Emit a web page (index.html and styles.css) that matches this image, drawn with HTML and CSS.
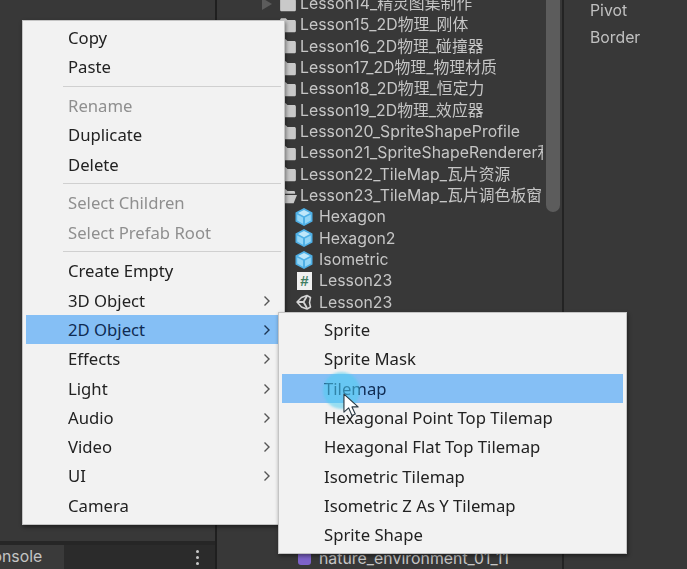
FILE: index.html
```html
<!DOCTYPE html>
<html lang="en">
<head>
<meta charset="utf-8">
<title>Unity context menu</title>
<link rel="stylesheet" href="styles.css">
</head>
<body>
<svg class="defs" width="0" height="0" aria-hidden="true">
  <defs>
    <symbol id="folder" viewBox="0 0 16 16"><path d="M1 3.500C1 2.600 1.600 2 2.500 2H6l1.500 1.500h6c.9 0 1.500.6 1.500 1.500v8c0 .9-.6 1.500-1.500 1.500h-11C1.600 14.500 1 13.900 1 13z" fill="#c9c9c9"/></symbol>
    <symbol id="folder-open" viewBox="0 0 16 16"><path d="M1 3.500C1 2.600 1.600 2 2.500 2H6l1.500 1.500h5.500c.8 0 1.300.5 1.300 1.300V6H4L1 13z" fill="#c9c9c9"/><path d="M4.300 7H16l-3 7.500H1.200z" fill="#c9c9c9"/></symbol>
    <symbol id="cube" viewBox="0 0 18 18"><path d="M9 0l8.500 4.400v9L9 18 .5 13.400v-9z" fill="#4fb0e6"/><path d="M9 2l6 3.100L9 8.300 3 5.100z" fill="#bfe7fa"/><path d="M2.200 6.500L8 9.600v6.100l-5.800-3.200zM15.800 6.500L10 9.600v6.100l5.800-3.200z" fill="#93d6f7"/></symbol>
  </defs>
</svg>
<div class="stage">
  <aside class="left-panel">
    <div class="left-body"></div>
    <div class="left-bar">
      <div class="tab">Console</div>
      <div class="kebab"><i></i><i></i><i></i></div>
    </div>
  </aside>
  <section class="project">
    <div class="tree">
      <div class="row folder-row"><span class="arrow"></span><svg class="ico-folder"><use href="#folder"/></svg><span class="label">Lesson14_精灵图集制作</span></div>
      <div class="row folder-row"><svg class="ico-folder"><use href="#folder"/></svg><span class="label">Lesson15_2D物理_刚体</span></div>
      <div class="row folder-row"><svg class="ico-folder"><use href="#folder"/></svg><span class="label">Lesson16_2D物理_碰撞器</span></div>
      <div class="row folder-row"><svg class="ico-folder"><use href="#folder"/></svg><span class="label">Lesson17_2D物理_物理材质</span></div>
      <div class="row folder-row"><svg class="ico-folder"><use href="#folder"/></svg><span class="label">Lesson18_2D物理_恒定力</span></div>
      <div class="row folder-row"><svg class="ico-folder"><use href="#folder"/></svg><span class="label">Lesson19_2D物理_效应器</span></div>
      <div class="row folder-row"><svg class="ico-folder"><use href="#folder"/></svg><span class="label">Lesson20_SpriteShapeProfile</span></div>
      <div class="row folder-row"><svg class="ico-folder"><use href="#folder"/></svg><span class="label">Lesson21_SpriteShapeRenderer利</span></div>
      <div class="row folder-row"><svg class="ico-folder"><use href="#folder"/></svg><span class="label">Lesson22_TileMap_瓦片资源</span></div>
      <div class="row folder-row"><svg class="ico-folder"><use href="#folder-open"/></svg><span class="label">Lesson23_TileMap_瓦片调色板窗口</span></div>
      <div class="row child-row"><svg class="ico-child"><use href="#cube"/></svg><span class="label">Hexagon</span></div>
      <div class="row child-row"><svg class="ico-child"><use href="#cube"/></svg><span class="label">Hexagon2</span></div>
      <div class="row child-row"><svg class="ico-child"><use href="#cube"/></svg><span class="label">Isometric</span></div>
      <div class="row child-row"><span class="ico-script">#</span><span class="label">Lesson23</span></div>
      <div class="row child-row"><svg class="ico-child" viewBox="0 0 18 18"><path d="M2 9l4.500-4.500L12 2.500l3.500 2-1 5 1 4.500-3.500 2-5.500-2z" fill="none" stroke="#d4d4d4" stroke-width="1.500" stroke-linejoin="round"/><path d="M2 9h6.500L12 3M8.500 9L12 15" fill="none" stroke="#d4d4d4" stroke-width="1.800"/></svg><span class="label">Lesson23</span></div>
      <div class="tree-gap"></div>
      <div class="row child-row"><svg class="ico-child" viewBox="0 0 18 18"><rect x="3" y="3" width="13" height="13" rx="3" fill="#7d62c9"/></svg><span class="label">nature_environment_01_11</span></div>
    </div>
    <div class="scrollbar"><div class="thumb"></div></div>
  </section>
  <aside class="inspector">
    <div class="prop">Pivot</div>
    <div class="prop">Border</div>
  </aside>
</div>

<div class="menu main-menu">
  <div class="item">Copy</div>
  <div class="item">Paste</div>
  <div class="sep"></div>
  <div class="item off">Rename</div>
  <div class="item">Duplicate</div>
  <div class="item">Delete</div>
  <div class="sep"></div>
  <div class="item off">Select Children</div>
  <div class="item off">Select Prefab Root</div>
  <div class="sep"></div>
  <div class="item">Create Empty</div>
  <div class="item sub">3D Object<svg class="chev" viewBox="0 0 8 12"><path d="M1.500 1.500L6 6l-4.500 4.500" /></svg></div>
  <div class="item sub active">2D Object<svg class="chev" viewBox="0 0 8 12"><path d="M1.500 1.500L6 6l-4.500 4.500" /></svg></div>
  <div class="item sub">Effects<svg class="chev" viewBox="0 0 8 12"><path d="M1.500 1.500L6 6l-4.500 4.500" /></svg></div>
  <div class="item sub">Light<svg class="chev" viewBox="0 0 8 12"><path d="M1.500 1.500L6 6l-4.500 4.500" /></svg></div>
  <div class="item sub">Audio<svg class="chev" viewBox="0 0 8 12"><path d="M1.500 1.500L6 6l-4.500 4.500" /></svg></div>
  <div class="item sub">Video<svg class="chev" viewBox="0 0 8 12"><path d="M1.500 1.500L6 6l-4.500 4.500" /></svg></div>
  <div class="item sub">UI<svg class="chev" viewBox="0 0 8 12"><path d="M1.500 1.500L6 6l-4.500 4.500" /></svg></div>
  <div class="item">Camera</div>
</div>

<div class="menu sub-menu">
  <div class="item">Sprite</div>
  <div class="item">Sprite Mask</div>
  <div class="item active">Tilemap</div>
  <div class="item">Hexagonal Point Top Tilemap</div>
  <div class="item">Hexagonal Flat Top Tilemap</div>
  <div class="item">Isometric Tilemap</div>
  <div class="item">Isometric Z As Y Tilemap</div>
  <div class="item">Sprite Shape</div>
</div>

<div class="click-halo"></div>
<svg class="cursor" viewBox="0 0 18 26" aria-hidden="true"><path d="M1 1v19l5-4.500 3.500 8 3.500-1.500-3.500-7.500H16z" fill="#fff" stroke="#2c3a44" stroke-width="1.200" stroke-linejoin="round"/></svg>
</body>
</html>
```
FILE: styles.css
```css
* { box-sizing: border-box; }
html, body { margin: 0; height: 100%; overflow: hidden; }
body {
  width: 687px;
  height: 569px;
  position: relative;
  background: #383838;
  font-family: "Noto Sans", "Noto Sans CJK SC", sans-serif;
}
.defs { position: absolute; }
.stage { display: flex; height: 569px; filter: blur(0.5px); }

.left-panel {
  width: 217px;
  display: flex;
  flex-direction: column;
  border-right: 2px solid #1f1f1f;
}
.left-body { flex: 1; background: #383838; }
.left-bar {
  height: 28px;
  display: flex;
  align-items: stretch;
  justify-content: space-between;
  background: #2b2b2b;
  border-top: 4px solid #262626;
}
.tab {
  width: 64px;
  background: #3a3a3a;
  color: #c4c4c4;
  font: 15.800px/24px Inter, sans-serif;
  text-indent: -19px;
  white-space: nowrap;
  overflow: hidden;
}
.kebab {
  width: 36px;
  display: flex;
  flex-direction: column;
  align-items: center;
  justify-content: center;
  gap: 3px;
}
.kebab i { width: 3px; height: 3px; border-radius: 50%; background: #c8c8c8; }

.project {
  width: 347px;
  display: flex;
  background: #383838;
  border-right: 2px solid #232323;
}
.tree { width: 326px; overflow: hidden; margin-top: -7px; }
.row {
  height: 21.33px;
  display: flex;
  align-items: center;
  white-space: nowrap;
  font: 15.800px/21px Inter, "Noto Sans CJK SC", sans-serif;
  letter-spacing: .04px;
  color: #c6c6c6;
  position: relative;
}
.folder-row { padding-left: 62px; }
.child-row { padding-left: 78px; }
.label { overflow: hidden; }
.arrow {
  position: absolute;
  left: 45px;
  top: 5px;
  border-left: 10px solid #5c5c5c;
  border-top: 6px solid transparent;
  border-bottom: 6px solid transparent;
}
.ico-folder { width: 18px; height: 18px; margin-right: 3px; flex: none; }
.ico-child { width: 18px; height: 18px; margin-right: 6px; flex: none; }
.ico-script {
  width: 15px;
  height: 18px;
  margin: 0 7px 0 2px;
  flex: none;
  background: #f0f0f0;
  color: #3f7d62;
  font: bold 15px/18px "Liberation Sans", sans-serif;
  text-align: center;
}
.tree-gap { height: 234.67px; }
.scrollbar { width: 19px; padding: 0 2px 0 3px; }
.thumb { height: 212px; background: #5c5c5c; border-radius: 0 0 7px 7px; }

.inspector { flex: 1; padding: 0 0 0 26px; margin-top: -3px; }
.prop {
  height: 27px;
  font: 15.800px/27px Inter, sans-serif;
  color: #c0c0c0;
}

.menu {
  position: absolute;
  background: #f2f2f2;
  border: 1px solid #c4c4c4;
  box-shadow: 1px 2px 4px rgba(0, 0, 0, .45);
  color: #222;
  font: 16.700px/29.33px "Noto Sans", sans-serif;
  filter: blur(0.4px);
}
.main-menu { left: 22px; top: 20px; width: 263px; height: 505px; padding: 2px 3px 0; }
.sub-menu { left: 278px; top: 312px; width: 349px; height: 242px; padding: 2px 3px 0; }
.main-menu .item { padding-left: 42px; margin-right: 3px; }
.sub-menu .item { padding-left: 42px; }
.item { height: 29.33px; position: relative; white-space: nowrap; }
.off { color: #8f8f8f; }
.active { background: #85bff5; color: #0f2b52; }
.sep { height: 9.300px; margin: 0 0 0 37px; position: relative; }
.sep::after {
  content: "";
  position: absolute;
  left: 0;
  right: 0;
  top: 4px;
  height: 1px;
  background: #d0d0d0;
}
.chev {
  position: absolute;
  right: 7px;
  top: 9px;
  width: 8px;
  height: 12px;
  fill: none;
  stroke: #555;
  stroke-width: 1.400;
}
.active .chev { stroke: #1d3553; }

.click-halo {
  position: absolute;
  left: 323px;
  top: 372px;
  width: 37px;
  height: 37px;
  border-radius: 50%;
  background: rgba(78, 205, 240, .55);
  filter: blur(1px);
}
.cursor { position: absolute; left: 343px; top: 393px; width: 17px; height: 25px; }
```
